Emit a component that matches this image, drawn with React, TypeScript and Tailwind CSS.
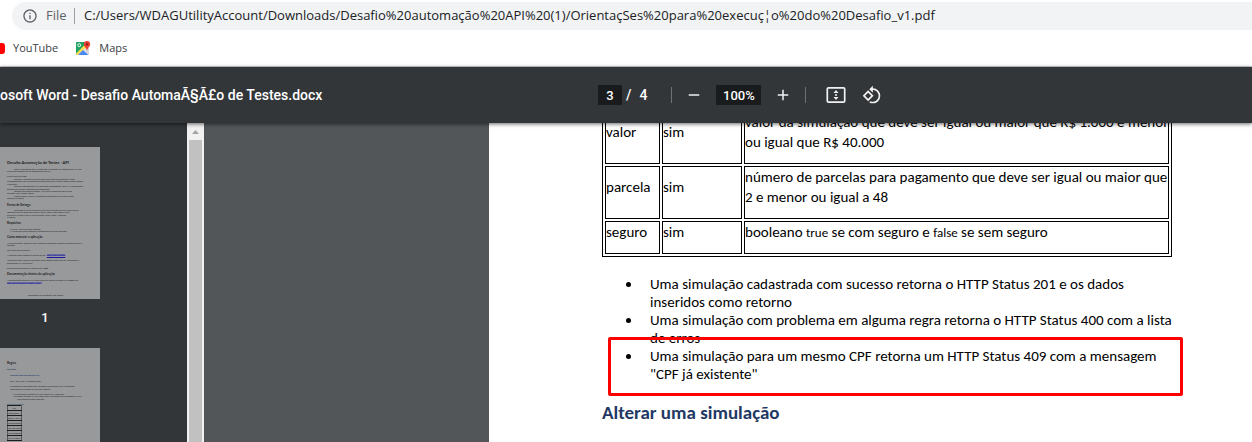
import React from "react";
import { MdRotate90DegreesCcw, MdAdd, MdRemove, MdInfoOutline } from "react-icons/md";

type Line = [text: string, style: string];

const head = "text-[4px] leading-[4px] font-bold";
const sub = "text-[3px] leading-[4px] font-bold";
const blue = "text-[2px] leading-[3px] font-bold text-[#1f3864]";
const body = "text-[2px] leading-[2px]";

const firstPage: Line[] = [
  ["Desafio Automação de Testes - API", head],
  ["Este é o documento para a automação e realização da automação de API, que", `${body} mt-[3px] pl-[7px]`],
  ["avaliará os conceitos em um determinado cenário.", body],
  ["O que você deve fazer:", `${body} mt-[3px]`],
  ["Executar a aplicação cuja explicação está nesta documentação, validar", `${body} mt-px pl-[7px]`],
  ["automaticamente, por ferramentas de testes conforme as regras (Etapa: Como executar", body],
  ["a aplicação).", `${body} mt-px`],
  ["Segundo entendimento, crie um projeto automatizado, para a API demonstrada", `${body} pl-[7px]`],
  ["baseado em qualquer linguagem de programação.", `${body} mt-px`],
  ["Teremos um prazo de entrega. Nos avise se alguma dúvida ou com", `${body} pl-[7px]`],
  ["situações. Veja a Etapa: Regras.", body],
  ["Iremos analisar e avaliar a automação dos testes dos serviços criados", `${body} mt-px pl-[7px]`],
  ["conforme as regras.", body],
  ["Forma de Entrega", `${sub} mt-[4px]`],
  ["Queremos ver o seu uso do Git, para isto o projeto deve ser criado em um", `${body} mt-[2px] pl-[7px]`],
  ["repositório de sua conta com o nome \"prova_nome\" onde nome é o seu.", body],
  ["Envie para o nosso e-mail o link do projeto \"prova_nome\" e aguarde", `${body} mt-px`],
  ["o retorno.", body],
  ["Requisitos", `${sub} mt-[3px]`],
  ["○  Java 8+ JDK deve estar instalado", `${body} mt-[3px] pl-[3px]`],
  ["○  Maven deve estar instalado e configurado no path da aplicação", `${body} pl-[3px]`],
  ["Como executar a aplicação", `${sub} mt-[3px]`],
  ["Na raiz do projeto, através de seu Prompt de Commando/Terminal/Console execute o", `${body} mt-[3px]`],
  ["comando", body],
  ["mvn clean spring-boot:run", `${body} mt-[3px]`],
  ["A aplicação estará disponível através da URL", `${body} mt-[3px]`],
  ["Você pode trocar a porta da aplicação, caso a 8080 já esteja em uso, adicionando a", `${body} mt-[3px]`],
  ["propriedade JVM server.port.", `${body} mt-px`],
  ["mvn clean spring-boot:run -Dserver.port=8888", `${body} mt-[3px]`],
  ["Documentação técnica da aplicação", `${sub} mt-[3px]`],
  ["A documentação técnica da API está disponível através do OpenAPI/Swagger em", `${body} mt-[3px]`],
];

const secondPage: Line[] = [
  ["Regras", sub],
  ["Restrições", `${blue} mt-[3px]`],
  ["Consultar uma restrição pelo CPF", `${blue} mt-[3px] pl-[3px]`],
  ["GET <host>/api/v1/restricoes/{cpf}", `${body} mt-[3px] pl-[3px]`],
  ["O endpoint de Restrições tem a finalidade de consultar o CPF informando,", `${body} mt-[3px] pl-[3px]`],
  ["retornando se ele possui ou não uma restrição.", `${body} mt-px pl-[3px]`],
  ["○  Se não possui restrição do HTTP Status 204 é retornado", `${body} mt-[3px] pl-[6px]`],
  ["○  Se possui restrição o HTTP Status 200 é retornado com a mensagem \"O CPF", `${body} pl-[6px]`],
  ["99999999999 possui restrição\"", `${body} mt-px pl-[10px]`],
  ["CPFs com restrição", `${body} mt-[3px] text-[#1f3864]`],
];

const cpfs = ["CPF", "97093236014", "60094146012", "84809766080", "62648716050", "26276298085", "01317496094"];

const code = "font-['Carlito','Lato',sans-serif] text-[13px] leading-none";

const rows: { name: string; required: string; text: React.ReactNode }[] = [
  { name: "valor", required: "sim", text: <>valor da simulação que deve ser igual ou maior que R$ 1.000 e menor<br />ou igual que R$ 40.000</> },
  { name: "parcela", required: "sim", text: <>número de parcelas para pagamento que deve ser igual ou maior que<br />2 e menor ou igual a 48</> },
  {
    name: "seguro",
    required: "sim",
    text: (
      <>
        booleano <code className={code}>true</code> se com seguro e <code className={code}>false</code> se sem seguro
      </>
    ),
  },
];

function Lines({ lines }: { lines: Line[] }) {
  return (
    <>
      {lines.map(([text, style], i) => (
        <p key={i} className={`whitespace-nowrap ${style}`}>
          {text}
          {text.endsWith("através da URL") && (
            <a href="#app" className="ml-px bg-[#1a1aa8]/40 text-[#1a1aa8] underline">http://localhost:8080</a>
          )}
        </p>
      ))}
    </>
  );
}

function MapsIcon() {
  return (
    <svg className="size-4 shrink-0" viewBox="0 0 16 16" aria-hidden="true">
      <rect x="1" y="2" width="13" height="13" rx="1" fill="#e8eaed" />
      <path d="M2 2h8v5L2 14.500Q1 14.500 1 13.500V3q0-1 1-1z" fill="#1ea362" />
      <path d="M1 13.500L10.500 4l2 2L3 15H2q-1 0-1-1.500z" fill="#fddc4d" />
      <path d="M9.500 10l4.500-3v7l-.5 1z" fill="#d5d8db" />
      <path d="M3 15l5-5 5.500 5z" fill="#4a89f3" />
      <circle cx="4.200" cy="5.200" r="1.500" fill="none" stroke="#fff" strokeWidth="0.9" />
      <path d="M12 1a3.200 3.200 0 0 0-3.200 3.200C8.800 6.800 11.500 7.500 12 11c.5-3.500 3.200-4.200 3.200-6.800A3.200 3.200 0 0 0 12 1z" fill="#ea4335" />
      <circle cx="12" cy="4.200" r="1.200" fill="#8c231b" />
    </svg>
  );
}

function FitIcon() {
  return (
    <svg className="size-5" viewBox="0 0 20 20" fill="none" aria-hidden="true">
      <rect x="1.300" y="2.800" width="17.400" height="14.400" rx="1.200" stroke="#f1f1f1" strokeWidth="1.700" />
      <path d="M10 5l2.500 3h-5zM10 15l2.500-3h-5zM9 9.300h2v1.400H9z" fill="#f1f1f1" />
    </svg>
  );
}

export default function App() {
  return (
    <div className="flex h-screen flex-col overflow-hidden bg-white font-['Roboto',sans-serif]">
      <header className="shrink-0 border-b border-[#d0d3d6] font-['Open_Sans',sans-serif]">
        <div className="flex pt-0.5 pl-3">
          <div className="flex h-7 flex-1 items-center rounded-l-full bg-[#f1f3f4] pl-2.5 text-[13px]">
            <MdInfoOutline className="size-4 shrink-0 text-[#5f6368]" />
            <label htmlFor="url" className="ml-2 w-5 text-[#5f6368]">File</label>
            <span className="ml-2 h-4 w-px shrink-0 bg-[#9aa0a6]" />
            <input
              id="url"
              className="ml-[9px] min-w-0 flex-1 bg-transparent text-[#202124] outline-none"
              defaultValue="C:/Users/WDAGUtilityAccount/Downloads/Desafio%20automação%20API%20(1)/OrientaçSes%20para%20execuç¦o%20do%20Desafio_v1.pdf"
            />
          </div>
        </div>
        <nav className="flex h-9 items-center text-[11px] text-[#3c4043]">
          <a href="#youtube" className="flex items-center">
            <span className="h-[11px] w-[5px] rounded-r-[3px] bg-[#ff0000]" />
            <span className="ml-2">YouTube</span>
          </a>
          <a href="#maps" className="ml-[17px] flex items-center">
            <MapsIcon />
            <span className="ml-2">Maps</span>
          </a>
        </nav>
      </header>

      <div className="z-10 flex h-14 shrink-0 items-center bg-[#323639] text-sm font-medium text-white shadow-[0_1px_4px_rgba(0,0,0,0.6)]">
        <h1 className="w-[598px] shrink-0 whitespace-nowrap">osoft Word - Desafio AutomaÃ§Ã£o de Testes.docx</h1>
        <input aria-label="Page" defaultValue="3" className="h-5 w-6 bg-[#191b1c] text-center text-[13px] outline-none" />
        <span className="ml-1">/</span>
        <span className="ml-2 w-2">4</span>
        <span className="ml-6 h-4 w-px bg-[#6f7274]" />
        <button aria-label="Zoom out" className="ml-[13px]"><MdRemove className="size-[18px] text-[#f1f1f1]" /></button>
        <input aria-label="Zoom" defaultValue="100%" className="ml-[13px] h-5 w-[45px] bg-[#191b1c] text-center text-[13px] outline-none" />
        <button aria-label="Zoom in" className="ml-[13px]"><MdAdd className="size-[18px] text-[#f1f1f1]" /></button>
        <span className="ml-[13px] h-4 w-px bg-[#6f7274]" />
        <button aria-label="Fit to page" className="ml-5"><FitIcon /></button>
        <button aria-label="Rotate" className="ml-4"><MdRotate90DegreesCcw className="size-5 text-[#f1f1f1]" /></button>
      </div>

      <div className="flex min-h-0 flex-1 bg-[#525659]">
        <aside className="flex w-[187px] shrink-0 flex-col overflow-hidden bg-[#323639] pt-6 font-['Lato',sans-serif]">
          <div className="h-[152px] w-[100px] shrink-0 overflow-hidden bg-[#98999b] pt-3.5 pl-[7px] text-[#1c1d1e]">
            <Lines lines={firstPage} />
            <a href="#docs" className="mt-px block w-[35px] overflow-hidden bg-[#1a1aa8]/40 text-[2px] leading-[2px] whitespace-nowrap text-[#1a1aa8] underline">
              http://localhost:8080/swagger-ui.html
            </a>
            <p className="mt-2.5 pr-4 text-center text-[2px] leading-[2px]">Classificação da informação: Uso Interno</p>
          </div>
          <p className="w-[90px] shrink-0 pt-2 pb-5 text-center font-['Roboto',sans-serif] text-[13px] leading-[21px] font-medium text-white">1</p>
          <div className="h-[152px] w-[100px] shrink-0 overflow-hidden bg-[#98999b] pt-[13px] pl-[7px] text-[#1c1d1e]">
            <Lines lines={secondPage} />
            <table className="w-[13px] border-collapse text-[2px] leading-[4px]">
              <tbody>
                {cpfs.map((cpf) => (
                  <tr key={cpf}>
                    <td className="border border-[#1c1d1e] border-x-[#58595b] p-0 text-center">{cpf}</td>
                  </tr>
                ))}
              </tbody>
            </table>
          </div>
        </aside>
        <div className="flex w-[17px] shrink-0 flex-col items-center bg-[#f1f1f1]">
          <svg className="h-[17px] w-[17px] shrink-0" viewBox="0 0 17 17" aria-hidden="true">
            <path d="M5 11l3.500-4 3.500 4z" fill="#a3a3a3" />
          </svg>
          <div className="w-[13px] flex-1 bg-[#c1c1c1]" />
        </div>

        <main className="ml-[285px] flex-1 overflow-hidden bg-white pr-20 pl-[113px] font-['Carlito','Lato',sans-serif] text-[15px] text-black">
          <table className="-mt-[15px] w-full table-fixed border-separate border-spacing-[2px] border border-black leading-5">
            <colgroup>
              <col className="w-[55px]" />
              <col className="w-20" />
              <col />
            </colgroup>
            <tbody>
              {rows.map((row) => (
                <tr key={row.name}>
                  <td className="border border-black p-0 pb-[11px]">{row.name}</td>
                  <td className="border border-black p-0 pb-[11px]">{row.required}</td>
                  <td className="border border-black p-0 pb-[11px] whitespace-nowrap">{row.text}</td>
                </tr>
              ))}
            </tbody>
          </table>
          <ul className="mt-[18px] list-disc pl-10 leading-[18px]">
            <li className="pl-2">Uma simulação cadastrada com sucesso retorna o HTTP Status 201 e os dados<br />inseridos como retorno</li>
            <li className="pl-2 whitespace-nowrap">Uma simulação com problema em alguma regra retorna o HTTP Status 400 com a lista<br />de erros</li>
            <li className="relative pl-2">
              Uma simulação para um mesmo CPF retorna um HTTP Status 409 com a mensagem<br />"CPF já existente"
              <span className="absolute -top-2.5 -right-[11px] -bottom-[13px] -left-[34px] rounded-[2px] border-3 border-[#ff0000]" />
            </li>
          </ul>
          <h2 className="mt-[18px] text-[19px] leading-6 font-bold text-[#1f3864]">Alterar uma simulação</h2>
        </main>
      </div>
    </div>
  );
}
